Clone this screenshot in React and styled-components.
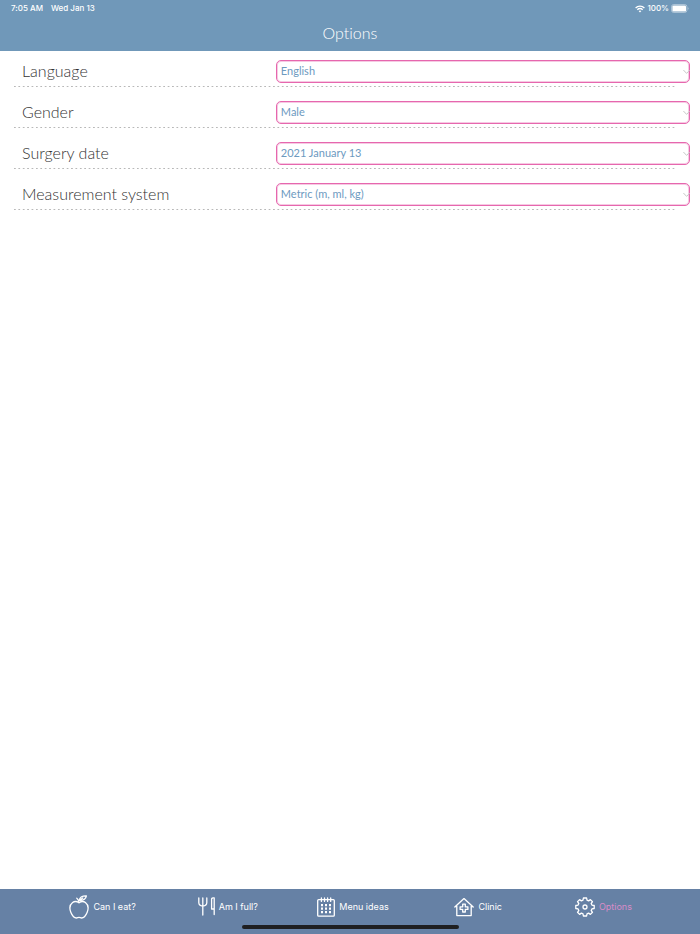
import React, { useState } from 'react';
import styled, { createGlobalStyle } from 'styled-components';

const GlobalStyle = createGlobalStyle`
  * {
    box-sizing: border-box;
  }
  body {
    margin: 0;
    background: #fff;
    font-family: Lato, 'Liberation Sans', sans-serif;
    font-variant-ligatures: none;
  }
`;

const Page = styled.div`
  min-height: 100vh;
  display: flex;
  flex-direction: column;
`;

const Header = styled.header`
  height: 51px;
  background: #7098b9;
  color: #fff;
`;

const StatusBar = styled.div`
  height: 17px;
  padding: 0 11px;
  display: flex;
  align-items: center;
  justify-content: space-between;
  font-family: Inter, 'Liberation Sans', sans-serif;
  font-size: 8px;
  font-weight: 500;
  line-height: 17px;
`;

const StatusGroup = styled.div`
  display: flex;
  align-items: center;
  gap: ${(props) => props.$gap}px;
`;

const Title = styled.h1`
  margin: 0;
  font-size: 16px;
  font-weight: 300;
  line-height: 32px;
  text-align: center;
`;

const Form = styled.form`
  flex: 1;
`;

const Row = styled.div`
  padding: 9px 10px 3px 22px;
  display: grid;
  grid-template-columns: 38fr 62fr;
  align-items: start;
`;

const Label = styled.label`
  color: #333;
  font-size: 16px;
  font-weight: 300;
  line-height: 21px;
`;

const SelectBox = styled.div`
  position: relative;
  display: flex;
`;

const Select = styled.select`
  appearance: none;
  width: 100%;
  height: 23px;
  padding: 0 16px 2px 4px;
  border: 1px solid #e667ae;
  border-radius: 5px;
  box-shadow: inset 0 0 0 1px rgba(230, 103, 174, 0.35);
  background: transparent;
  color: #6d9abf;
  font-family: inherit;
  font-size: 11px;
`;

const Chevron = styled.svg`
  position: absolute;
  top: 9px;
  right: 0;
  pointer-events: none;
`;

const Divider = styled.hr`
  height: 1px;
  margin: 0 23px 5px 14px;
  border: 0;
  background-image: linear-gradient(to right, #b8b8b8 35%, transparent 35%);
  background-size: calc(100% / 151) 1px;
`;

const TabBar = styled.nav`
  height: 45px;
  background: #6681a5;
  display: flex;
  flex-direction: column;
  align-items: center;
  justify-content: space-between;
  padding-bottom: 5px;
`;

const Tabs = styled.div`
  width: 100%;
  height: 36px;
  padding: 0 34px 0 40px;
  display: flex;
  align-items: center;
`;

const Tab = styled.a`
  flex: 1;
  display: flex;
  align-items: center;
  justify-content: center;
  gap: 4px;
  color: ${(props) => (props.$active ? '#d98cc8' : '#fff')};
  font-family: Inter, 'Liberation Sans', sans-serif;
  font-size: 9px;
  line-height: 24px;
  text-decoration: none;
  white-space: nowrap;
  svg {
    color: #fff;
  }
`;

const HomeIndicator = styled.div`
  width: 31%;
  height: 4px;
  border-radius: 2px;
  background: #1f1f21;
`;

const Icon = ({ width = 20, children }) => (
  <svg
    width={width}
    height='24'
    viewBox={`0 0 ${width} 24`}
    fill='none'
    stroke='currentColor'
    strokeWidth='1.3'
    strokeLinecap='round'
    strokeLinejoin='round'
    aria-hidden='true'
  >
    {children}
  </svg>
);

const AppleIcon = () => (
  <Icon>
    <path d='M10 7.7C8 6.4 5.6 6 3.6 7.5C.8 9.6.4 13.6 1.8 17.2C3.2 20.6 5.6 23 7.4 23C8.4 23 9 22.4 10 22.4S11.6 23 12.6 23C14.4 23 16.8 20.6 18.2 17.2C19.6 13.6 19.2 9.6 16.4 7.5C14.4 6 12 6.4 10 7.7Z' />
    <path d='M7.8 3.2C9.2 4.2 9.9 5.7 10 7.7M10.4 5.4C10.4 2.4 12.8.8 17.4.9C16.8 4 14.4 5.6 10.4 5.4ZM10.4 5.4L13.8 3' />
  </Icon>
);

const CutleryIcon = () => (
  <Icon width={17}>
    <path d='M.8 3V7.4C.8 9.6 2.6 10.8 4.8 11C7 10.8 8.8 9.6 8.8 7.4V3M4.8 3V20' />
    <path d='M13.6 3.8C14 2.9 15 2.8 16.2 3V19.6M13.6 3.8V14H16.2' />
  </Icon>
);

const CalendarIcon = () => (
  <Icon width={18}>
    <rect x='.7' y='4.6' width='16.6' height='16.6' rx='1' />
    <path d='M4.4 3V6.4M7.5 3V6.4M10.6 3V6.4M13.7 3V6.4' />
    <path
      d='M4 10.2H6M8 10.2H10M12 10.2H14M4 13.7H6M8 13.7H10M12 13.7H14M4 17.2H6M8 17.2H10M12 17.2H14'
      strokeWidth='2.2'
      strokeLinecap='butt'
    />
  </Icon>
);

const ClinicIcon = () => (
  <Icon>
    <path d='M2.8 11.2L.8 12L10 3.6L19.2 12L17.2 11.2V20.6H2.8Z' />
    <path d='M8.7 9.2H11.3V11.8H13.9V14.4H11.3V17H8.7V14.4H6.1V11.8H8.7Z' />
  </Icon>
);

const GearIcon = () => (
  <Icon>
    <path d='M8.4 3H11.6L12 5.2L13.6 5.9L15.4 4.6L17.5 6.7L16.2 8.5L16.9 10.1L19.2 10.5V13.5L16.9 13.9L16.2 15.5L17.5 17.3L15.4 19.4L13.6 18.1L12 18.8L11.6 21H8.4L8 18.8L6.4 18.1L4.6 19.4L2.5 17.3L3.8 15.5L3.1 13.9L.8 13.5V10.5L3.1 10.1L3.8 8.5L2.5 6.7L4.6 4.6L6.4 5.9L8 5.2Z' />
    <circle cx='10' cy='12' r='2' />
  </Icon>
);

const WifiIcon = () => (
  <svg width='10' height='8' viewBox='0 0 10 8' fill='none' stroke='#fff' strokeWidth='1.3'>
    <path d='M.6 3C3 .6 7 .6 9.4 3M2.3 4.8C3.8 3.4 6.2 3.4 7.7 4.8' />
    <path d='M3.6 6.1C4.4 5.4 5.6 5.4 6.4 6.1L5 7.6Z' fill='#fff' stroke='none' />
  </svg>
);

const BatteryIcon = () => (
  <svg width='18' height='9' viewBox='0 0 18 9'>
    <rect x='.5' y='.5' width='15.4' height='8' rx='2.2' fill='none' stroke='#fff' strokeOpacity='.4' />
    <rect x='1.4' y='1.4' width='13.6' height='6.2' rx='1.2' fill='#fff' />
    <path d='M16.8 3.2C17.8 3.6 17.8 5.4 16.8 5.8Z' fill='#fff' fillOpacity='.5' />
  </svg>
);

const settings = [
  { id: 'language', label: 'Language', options: ['English', 'Français'] },
  { id: 'gender', label: 'Gender', options: ['Male', 'Female'] },
  { id: 'surgery', label: 'Surgery date', options: ['2021 January 13', '2021 January 14'] },
  {
    id: 'system',
    label: 'Measurement system',
    options: ['Metric (m, ml, kg)', 'Imperial (ft, oz, lb)'],
  },
];

const tabs = [
  { id: 'eat', label: 'Can I eat?', icon: AppleIcon },
  { id: 'full', label: 'Am I full?', icon: CutleryIcon },
  { id: 'menu', label: 'Menu ideas', icon: CalendarIcon },
  { id: 'clinic', label: 'Clinic', icon: ClinicIcon },
  { id: 'options', label: 'Options', icon: GearIcon },
];

const Setting = ({ id, label, options }) => {
  const [value, setValue] = useState(options[0]);
  return (
    <>
      <Row>
        <Label htmlFor={id}>{label}</Label>
        <SelectBox>
          <Select id={id} value={value} onChange={(e) => setValue(e.target.value)}>
            {options.map((option) => (
              <option key={option}>{option}</option>
            ))}
          </Select>
          <Chevron width='7' height='6' viewBox='0 0 7 6' fill='none' stroke='#c8c8c8'>
            <path d='M.4 1L3.6 4.4L6.8 1' />
          </Chevron>
        </SelectBox>
      </Row>
      <Divider />
    </>
  );
};

export default () => (
  <Page>
    <GlobalStyle />
    <Header>
      <StatusBar>
        <StatusGroup $gap={8}>
          <span>7:05 AM</span>
          <span>Wed Jan 13</span>
        </StatusGroup>
        <StatusGroup $gap={2}>
          <WifiIcon />
          <span>100%</span>
          <BatteryIcon />
        </StatusGroup>
      </StatusBar>
      <Title>Options</Title>
    </Header>
    <Form>
      {settings.map((setting) => (
        <Setting key={setting.id} {...setting} />
      ))}
    </Form>
    <TabBar>
      <Tabs>
        {tabs.map(({ id, label, icon: TabIcon }) => (
          <Tab
            key={id}
            href={`#${id}`}
            $active={id === 'options'}
            aria-current={id === 'options' ? 'page' : undefined}
          >
            <TabIcon />
            {label}
          </Tab>
        ))}
      </Tabs>
      <HomeIndicator />
    </TabBar>
  </Page>
);
